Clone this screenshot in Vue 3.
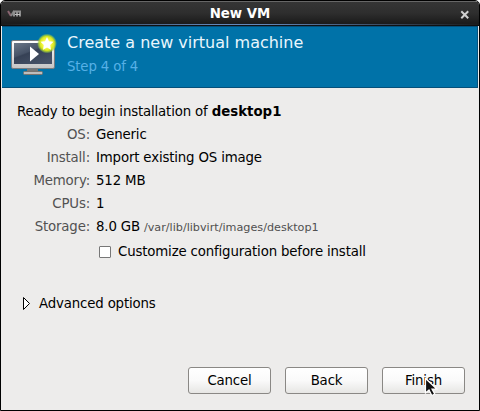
<script setup>
const details = [
  { label: 'OS:', value: 'Generic' },
  { label: 'Install:', value: 'Import existing OS image' },
  { label: 'Memory:', value: '512 MB' },
  { label: 'CPUs:', value: '1' },
  { label: 'Storage:', value: '8.0 GB', path: '/var/lib/libvirt/images/desktop1' },
]
const actions = ['Cancel', 'Back', 'Finish']
</script>

<template>
  <div class="window">
    <header class="titlebar">
      <svg class="vm-logo" width="16" height="12" viewBox="0 0 16 12">
        <path d="M1 3l3 5" fill="none" stroke="#8a6570" stroke-width="2" />
        <path d="M4 8l3-5" fill="none" stroke="#858585" stroke-width="2" />
        <path d="M7 8.500V3.500h6v5M10 3.500v5" fill="none" stroke="#8f8f8f" stroke-width="2" />
        <path d="M8 6.500h5" stroke="#c0c0c0" stroke-width="1" />
      </svg>
      <span class="title">New VM</span>
      <svg class="close" width="10" height="10" viewBox="0 0 10 10">
        <path d="M2 2l5.500 5.500M7.500 2l-5.500 5.500" stroke="#d0d0d0" stroke-width="2" stroke-linecap="square" />
      </svg>
    </header>
    <section class="banner">
      <svg class="monitor" width="48" height="44" viewBox="0 0 48 44">
        <defs>
          <linearGradient id="frame" x1="0" y1="0" x2="0" y2="1">
            <stop offset="0" stop-color="#fff" /><stop offset="1" stop-color="#c4c4c4" />
          </linearGradient>
          <linearGradient id="screen" x1="0" y1="0" x2="0.700" y2="1">
            <stop offset="0" stop-color="#6b7888" /><stop offset="0.450" stop-color="#465266" /><stop offset="0.500" stop-color="#364155" /><stop offset="1" stop-color="#465267" />
          </linearGradient>
          <radialGradient id="glow">
            <stop offset="0.400" stop-color="#fafa50" /><stop offset="0.700" stop-color="#d8e71d" /><stop offset="0.850" stop-color="#a5cf35" stop-opacity="0.700" /><stop offset="1" stop-color="#70b860" stop-opacity="0" />
          </radialGradient>
        </defs>
        <path d="M18 36h11v4h-11z" fill="#777" />
        <rect x="14.500" y="39.500" width="19" height="3" rx="1" fill="#bdbdbd" stroke="#77736f" />
        <rect x="2.500" y="8.500" width="43" height="28" rx="1.500" fill="url(#frame)" stroke="#777c80" />
        <rect x="5" y="11" width="38" height="21" fill="url(#screen)" />
        <path d="M21 14.500v15l9-7.500z" fill="#fff" />
        <circle cx="38" cy="11.500" r="10" fill="url(#glow)" />
        <path d="M38 5l2 4.200 4.500.6-3.300 3.200.8 4.700-4-2.200-4 2.200.8-4.700-3.300-3.200 4.500-.6z" fill="#fff" />
      </svg>
      <div class="headings">
        <h1>Create a new virtual machine</h1>
        <p>Step 4 of 4</p>
      </div>
    </section>
    <main class="body">
      <p class="ready">Ready to begin installation of <b>desktop1</b></p>
      <dl class="details">
        <template v-for="d in details" :key="d.label">
          <dt>{{ d.label }}</dt>
          <dd>{{ d.value }}<small v-if="d.path">{{ d.path }}</small></dd>
        </template>
      </dl>
      <label class="customize"><span class="box"></span><span>Customize configuration before install</span></label>
      <div class="advanced">
        <svg width="9" height="15" viewBox="0 0 9 15">
          <path d="M1.500 1.500v12l6-6z" fill="#fff" stroke="#000" />
        </svg>
        <span>Advanced options</span>
      </div>
      <footer class="actions">
        <button v-for="a in actions" :key="a" type="button">{{ a }}</button>
      </footer>
    </main>
    <svg class="pointer" width="16" height="22" viewBox="0 0 16 22">
      <path d="M1.500 1.500v14.500l3.500-3 2.800 5.500 3-1.400-2.800-5.100h4.800z" fill="#111" stroke="#fff" stroke-width="1.200" />
    </svg>
  </div>
</template>

<style>
body { margin: 0; background: #fff; }
</style>

<style scoped>
* { box-sizing: border-box; }
h1, p, dl, dt, dd { margin: 0; }
.window {
  position: relative;
  display: flex;
  flex-direction: column;
  width: 480px;
  height: 411px;
  border: 1px solid #000;
  border-radius: 5px 5px 0 0;
  background: #edeceb;
  overflow: hidden;
  color: #000;
  font-family: "DejaVu Sans", sans-serif;
  font-size: 13.333px;
  letter-spacing: -0.160px;
  white-space: nowrap;
}
.titlebar {
  position: relative;
  display: flex;
  flex: 0 0 25px;
  align-items: center;
  justify-content: space-between;
  padding: 0 9px 0 6px;
  border-bottom: 1px solid #111;
  background: linear-gradient(#666 0 1px, #353535 1px, #2e2e2e 12px, #1c1c1c 22px);
}
.titlebar::after {
  content: "";
  position: absolute;
  right: 0;
  bottom: 0;
  left: 0;
  height: 1px;
  background: linear-gradient(90deg, #1c1c1c, #6288bb 45%, #6288bb 55%, #1c1c1c);
}
.title { margin-right: 3px; color: #fff; font-weight: bold; letter-spacing: 0; }
.close { margin-top: 3px; }
.vm-logo { margin-top: 2px; }
.banner {
  display: flex;
  flex: 0 0 62px;
  margin: 0 1px;
  padding: 5px 0 0 7px;
  border: 1px solid #05507a;
  border-left-width: 0;
  background: #0072a8;
}
.headings { padding: 0 0 0 10px; }
h1 { color: #e9f6fd; font-size: 16px; font-weight: normal; letter-spacing: 0; line-height: 22px; }
.headings p { color: #56b0e6; line-height: 25px; }
.body { display: flex; flex: 1; flex-direction: column; padding: 12px 14px 16px 15px; }
.ready { padding-left: 1px; line-height: 23px; }
b { letter-spacing: 0; }
.details { display: grid; grid-template-columns: 74px 1fr; column-gap: 6px; line-height: 23px; }
dt { color: #525252; text-align: right; }
small { margin-left: 4px; color: #505050; font-size: 11.200px; letter-spacing: 0; }
.customize { display: flex; gap: 7px; align-items: center; margin: 1px 0 0 83px; line-height: 23px; }
.box { width: 12px; height: 12px; border: 1px solid #777; border-radius: 1px; background: #fff; }
.advanced { display: flex; gap: 8px; align-items: center; margin: 29px 0 0 6px; line-height: 23px; }
.advanced svg { margin-top: -1px; }
.actions { display: flex; gap: 14px; justify-content: flex-end; margin-top: auto; }
button {
  width: 83px;
  height: 27px;
  padding: 0;
  border: 1px solid #8a8885;
  border-radius: 3px;
  background: linear-gradient(#fff, #fafafa 50%, #e7e6e4);
  color: #000;
  font: inherit;
  letter-spacing: inherit;
}
.pointer { position: absolute; top: 376px; left: 423px; }
</style>
